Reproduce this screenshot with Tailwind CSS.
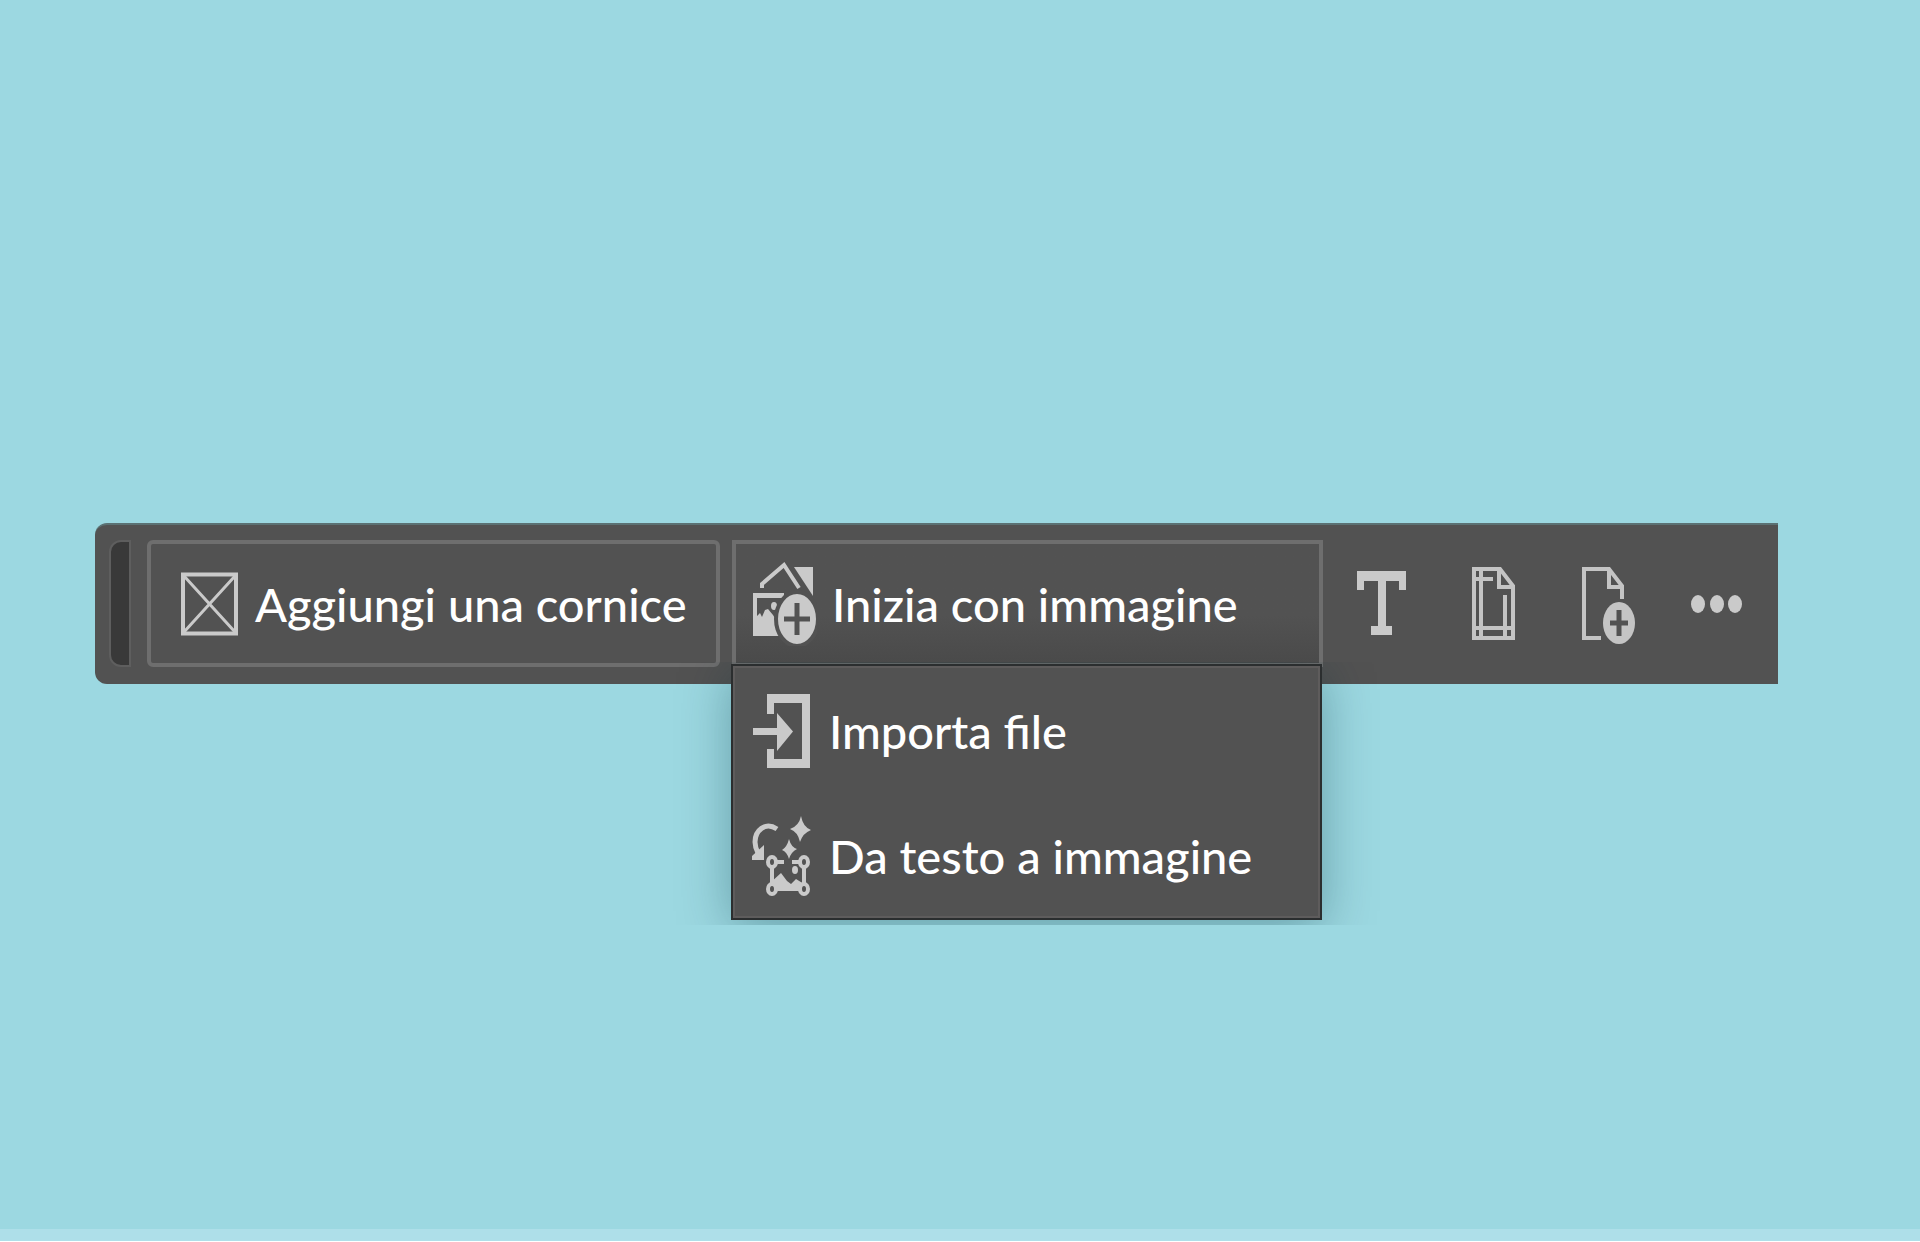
<!DOCTYPE html>
<html lang="it">
<head>
  <meta charset="utf-8">
  <meta name="viewport" content="width=device-width, initial-scale=1">
  <title>Barra delle attività contestuale</title>
  <script src="https://cdn.jsdelivr.net/npm/@tailwindcss/browser@4"></script>
</head>
<body class="min-h-screen flex flex-col bg-[#9cd8e1] font-['Lato',sans-serif] text-[47px] leading-[56px] font-medium text-white">
  <main class="flex-1 pt-[523px] pl-[95px] pr-[142px]">
    <div role="toolbar" class="grid grid-cols-[22px_601fr_591fr_auto] h-[161px] pt-[15px] pb-[17px] pl-[14px] pr-[5px] rounded-l-xl bg-[#525252] border-t-2 border-[#5b7173]">
      <div class="rounded-l-xl border-2 border-[#5e5e5e] bg-[#393939]"></div>

      <button type="button" class="flex items-center gap-[17px] pl-[30px] ml-4 mr-3 rounded-md border-4 border-[#6e6e6e] whitespace-nowrap">
        <svg class="w-[57px] h-16 shrink-0" viewBox="0 0 57 64" fill="none" stroke="#cacaca">
          <path stroke-width="4" d="M2 2.500H55V61.500H2z" />
          <path stroke-width="3" d="M3 4L54 60M54 4L3 60" />
        </svg>
        Aggiungi una cornice
      </button>

      <div class="relative flex">
        <button type="button" aria-haspopup="menu" aria-expanded="true" class="flex-1 flex items-center gap-[15px] pl-[17px] border-4 border-[#6e6e6e] bg-linear-to-b from-[#525252] from-60% to-[#4a4a4a] whitespace-nowrap">
          <svg class="w-16 h-[84px] shrink-0" viewBox="0 0 64 84" fill="#cacaca">
            <path d="M9 26V22L31 3L46 26" fill="none" stroke="#cacaca" stroke-width="4" />
            <path d="M41 5H60V34z" />
            <path d="M0 31H31V36H4V54L7 51L9 55L12 48L15 47L20 53L28 66V74H0z" />
            <ellipse cx="21" cy="44" rx="3" ry="4" />
            <ellipse cx="44" cy="57" rx="21" ry="27" fill="#cacaca" stroke="#525252" stroke-width="4" />
            <path d="M44 41V73M31 57H57" stroke="#525252" stroke-width="5" />
          </svg>
          Inizia con immagine
        </button>

        <div role="menu" class="absolute top-[124px] -left-px right-px px-0.5 pt-0.5 border-2 border-[#2b2e2f] bg-[#525252] outline-2 -outline-offset-4 outline-[#5e5c5c] shadow-[0_8px_48px_rgb(0_50_60/0.35)] [clip-path:inset(-2px_-60px_-5px_-60px)]">
          <button type="button" role="menuitem" class="w-full h-[125px] flex items-center gap-[15px] pl-[18px] whitespace-nowrap">
            <svg class="w-[61px] h-[80px] shrink-0" viewBox="0 -3 61 80" fill="#cacaca">
              <path d="M14 0H57V74H14V55H21V65H49V9H21V20H14z" />
              <path d="M0 34H24V19L40 37.500L24 57V41H0z" />
            </svg>
            Importa file
          </button>
          <button type="button" role="menuitem" class="w-full h-[125px] flex items-center gap-[15px] pl-[18px] whitespace-nowrap">
            <svg class="w-[61px] h-[80px] shrink-0 overflow-visible" viewBox="0 0 61 80" fill="#cacaca">
              <path d="M24 13C12 5 2 15 2 26C2 30 3 33 5 37" fill="none" stroke="#cacaca" stroke-width="5" />
              <path d="M11 29V44H-1V40z" />
              <path d="M48 0Q50 11 58 14Q50 17 47 26Q45 16 37 13Q46 10 48 0z" />
              <path d="M36 23Q38 31 44 33Q38 36 36 43Q34 36 29 34Q34 31 36 23z" />
              <path d="M17 75V67L28 57L34 65L38 68L43 63L51 68V75z" />
              <ellipse cx="42" cy="54" rx="3" ry="4" />
              <g fill="none" stroke="#cacaca" stroke-width="4">
                <path d="M23 46H31M39 46H47M19 51V67M51 51V67" />
                <g fill="#525252">
                  <ellipse cx="19" cy="46" rx="4" ry="5" />
                  <ellipse cx="51" cy="46" rx="4" ry="5" />
                  <ellipse cx="19" cy="73" rx="4" ry="5" />
                  <ellipse cx="51" cy="73" rx="4" ry="5" />
                </g>
              </g>
            </svg>
            Da testo a immagine
          </button>
        </div>
      </div>

      <div class="flex ml-[2px]">
        <button type="button" aria-label="Testo" class="w-28 flex items-center justify-center">
          <svg class="w-[49px] h-[74px]" viewBox="0 -4 49 74" fill="#cacaca">
            <path d="M0 0H49V19H42V10H29V55H35V64H14V55H21V10H7V19H0z" />
          </svg>
        </button>
        <button type="button" aria-label="Margini e colonne" class="w-28 flex items-center justify-center">
          <svg class="w-[43px] h-[74px]" viewBox="0 0 43 74" fill="none" stroke="#c4c4c4" stroke-width="4">
            <path d="M2 2H28L41 19V71H2zM27 2V20H41" />
            <path d="M9 2V71M33 28V71M2 12H21M2 61H41" />
          </svg>
        </button>
        <button type="button" aria-label="Aggiungi pagina" class="w-28 pl-2 flex items-center justify-center">
          <svg class="w-[56px] h-[80px]" viewBox="0 -3 56 80" fill="none" stroke="#c4c4c4" stroke-width="4">
            <path d="M20 71H3V2H28L41 19V32M28 2V20H41" />
            <ellipse cx="38" cy="56" rx="16" ry="21" fill="#c4c4c4" stroke="none" />
            <path d="M38 43V69M29 56H47" stroke="#525252" stroke-width="5" />
          </svg>
        </button>
        <button type="button" aria-label="Altre opzioni" class="w-28 flex items-center justify-center">
          <svg class="w-[52px] h-5" viewBox="0 0 52 20" fill="#cacaca">
            <ellipse cx="7" cy="10" rx="7" ry="9" />
            <ellipse cx="26" cy="10" rx="7" ry="9" />
            <ellipse cx="44" cy="10" rx="7" ry="9" />
          </svg>
        </button>
      </div>
    </div>
  </main>
  <footer class="h-[13px] bg-[#aedfe9] border-b border-white"></footer>
</body>
</html>
